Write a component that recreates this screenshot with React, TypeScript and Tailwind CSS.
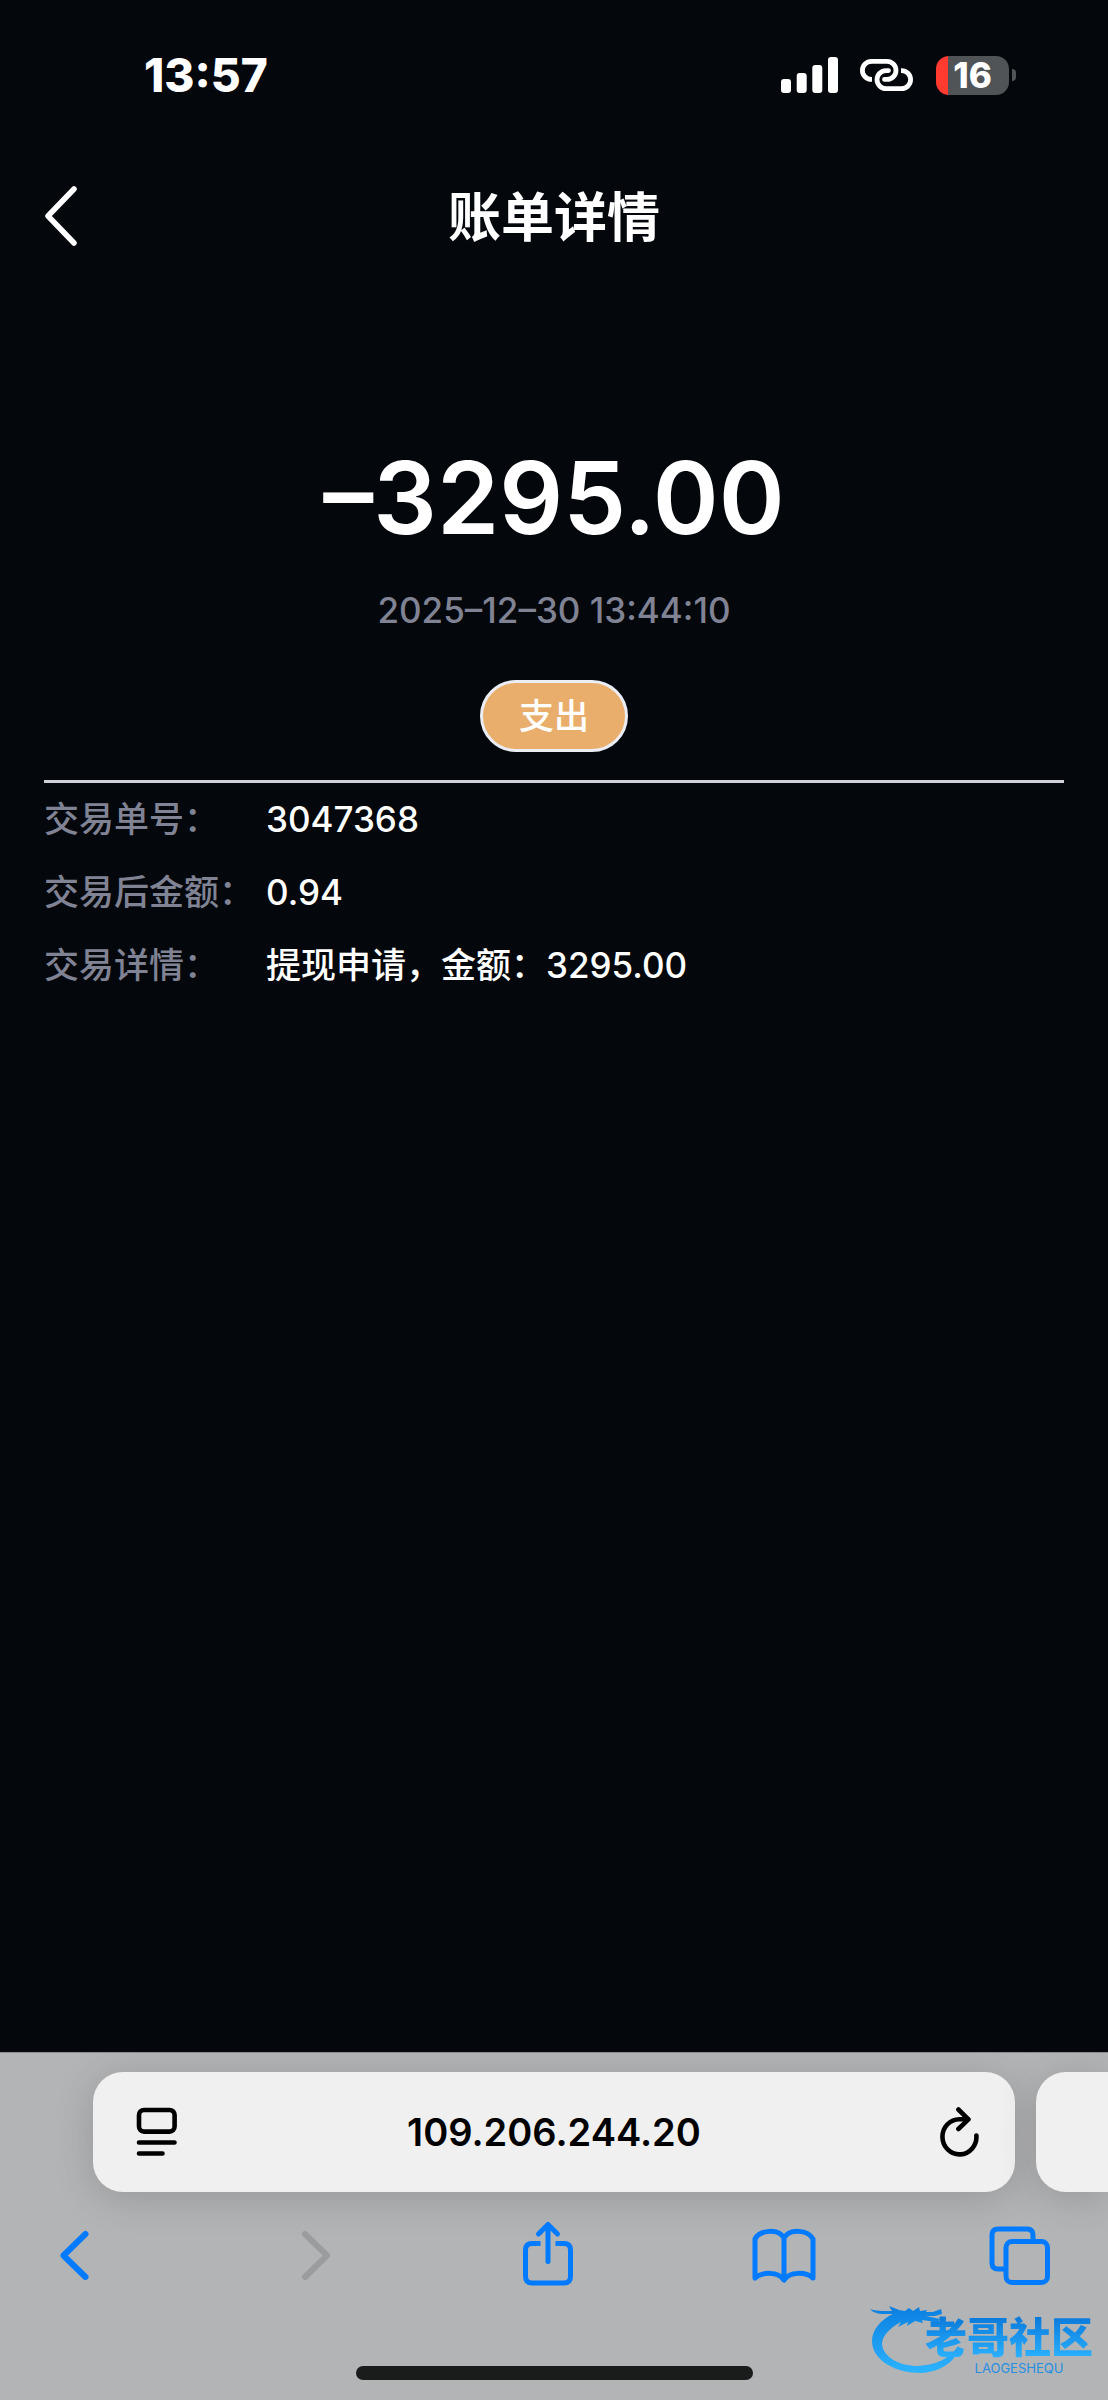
import type { ReactNode } from 'react';

const details = [
  { label: '交易单号：', value: '3047368' },
  { label: '交易后金额：', value: '0.94' },
  { label: '交易详情：', value: '提现申请，金额：3295.00' },
];

function StatusBar() {
  return (
    <div className="flex h-[150px] items-center justify-between pl-[144px] pr-[92px]">
      <span className="text-[46px] font-extrabold leading-none">13:57</span>
      <div className="flex items-center">
        <svg width="57" height="36" viewBox="0 0 57 36" fill="currentColor" aria-hidden="true">
          <rect x="0" y="22" width="10" height="14" rx="3" />
          <rect x="15.7" y="16" width="10" height="20" rx="3" />
          <rect x="31.3" y="8" width="10" height="28" rx="3" />
          <rect x="47" y="0" width="10" height="36" rx="3" />
        </svg>
        <svg
          className="ml-[22px]"
          width="53"
          height="32"
          viewBox="0 0 53 32"
          fill="none"
          stroke="currentColor"
          strokeWidth="4.8"
          aria-hidden="true"
        >
          <path strokeLinecap="round" d="M24.5 20.4H27a9 9 0 0 0 0-18H11.4" />
          <path d="M12 20.4h-.6a9 9 0 0 1 0-18" />
          <path strokeLinecap="round" d="M28.5 11.6H26a9 9 0 0 0 0 18h15.6" />
          <path d="M41 11.6h.6a9 9 0 0 1 0 18" />
        </svg>
        <div className="ml-[23px] flex items-center gap-[3px]">
          <div className="flex h-[39px] w-[73px] items-center justify-center rounded-[13px] bg-[linear-gradient(to_right,#ff3b30_12px,#505457_12px)]">
            <span className="text-[35px] font-extrabold leading-[39px]">16</span>
          </div>
          <div className="h-3 w-1 rounded-r-full bg-[#505457]" />
        </div>
      </div>
    </div>
  );
}

function ToolbarButton({ label, disabled, children }: { label: string; disabled?: boolean; children: ReactNode }) {
  return (
    <button
      type="button"
      aria-label={label}
      disabled={disabled}
      className="size-16 text-[#007aff] disabled:text-[#9b9c9d]"
    >
      <svg
        className="size-16 overflow-visible"
        viewBox="0 0 64 64"
        fill="none"
        stroke="currentColor"
        strokeWidth="5"
        strokeLinecap="round"
        strokeLinejoin="round"
      >
        {children}
      </svg>
    </button>
  );
}

function CommunityLogo() {
  return (
    <div className="absolute bottom-[24px] right-[15px] h-[74px] w-[224px]">
      <svg className="absolute inset-0 size-full" viewBox="0 0 224 74" aria-hidden="true">
        <defs>
          <linearGradient id="dragon" x1="0" y1="0" x2="0" y2="1">
            <stop offset="0" stopColor="#0a7ee0" />
            <stop offset="1" stopColor="#2cb4ff" />
          </linearGradient>
        </defs>
        <path
          fill="url(#dragon)"
          d="M1 7C7 9 13 9 23 9L20 4L30 8L36 9L40 6L44 9L50 5L51 9L58 8L57 10L64 10L72 7L73 12L66 14L57 14L71 17L69 21L60 19L53 18L54 21L46 19L38 24L39 20L29 25L32 20C21 26 13 34 13 42C14 55 30 64 49 64C67 63 82 56 89 44C90 57 73 70 52 71C26 71 3 58 3 39C3 27 13 17 24 12C15 12 6 13 1 7Z"
        />
      </svg>
      <div className="absolute bottom-0 right-0 flex flex-col items-center">
        <span className="bg-linear-to-b from-[#0a78da] to-[#2cb4ff] bg-clip-text text-[42px] font-black leading-[44px] text-transparent">
          老哥社区
        </span>
        <span className="pl-5 text-[13px] leading-[16px] text-[#2590e2]">LAOGESHEQU</span>
      </div>
    </div>
  );
}

function BrowserBar() {
  return (
    <footer className="relative overflow-hidden border-t border-[#8b8c8e] bg-[#b3b4b6] pb-5 pt-[19px]">
      <div className="flex gap-[21px] pl-[93px]">
        <div className="grid h-[120px] flex-1 grid-cols-[1fr_auto_1fr] items-center rounded-[30px] bg-[#f0f0f0] px-[34px] text-black shadow-[0_6px_40px_rgba(0,0,0,0.16)]">
          <button type="button" aria-label="页面设置" className="justify-self-start pl-2">
            <svg width="42" height="50" viewBox="0 0 42 50" fill="none" stroke="currentColor" strokeWidth="4.6" strokeLinecap="round">
              <rect x="4" y="3" width="35.6" height="21.6" rx="5" />
              <path d="M4 35.5H39.5M4 46.5H27.5" />
            </svg>
          </button>
          <span className="text-[38px] font-semibold leading-none">109.206.244.20</span>
          <button type="button" aria-label="重新加载" className="justify-self-end">
            <svg
              width="42"
              height="50"
              viewBox="0 0 42 50"
              fill="none"
              stroke="currentColor"
              strokeWidth="4.6"
              strokeLinecap="round"
              strokeLinejoin="round"
            >
              <path d="M37.4 28.5A17 17.6 0 1 1 20.4 12.2H29" />
              <path d="M19.4 2.5L29.4 12.4L19.4 22" />
            </svg>
          </button>
        </div>
        <div className="w-[72px] rounded-l-[30px] bg-[#f0f0f0] shadow-[0_6px_40px_rgba(0,0,0,0.16)]" />
      </div>
      <div className="mt-[31px] flex justify-between pl-[42px] pr-14">
        <ToolbarButton label="后退">
          <path strokeWidth="6" d="M43.5 11L21.5 32.5L43.5 54" />
        </ToolbarButton>
        <ToolbarButton label="前进" disabled>
          <path strokeWidth="6" d="M26 11L48 32.5L26 54" />
        </ToolbarButton>
        <ToolbarButton label="分享">
          <path strokeLinecap="butt" d="M25.5 20.5H17q-6.5 0-6.5 6.5V53.5q0 6.5 6.5 6.5H49q6.5 0 6.5-6.5V27q0-6.5-6.5-6.5H40.5" />
          <path d="M33 38.5V2M23.5 11L33 1.5L42.5 11" />
        </ToolbarButton>
        <ToolbarButton label="书签">
          <path d="M3 55V16C8 7 26 5 32 15C38 5 56 7 61 16V55C54 49 38 48 32 57C26 48 10 49 3 55ZM32 15V57" />
        </ToolbarButton>
        <ToolbarButton label="标签页">
          <path strokeLinecap="butt" d="M18 46H10q-6 0-6-6V12q0-6 6-6H39q6 0 6 6V18" />
          <rect x="18" y="18.5" width="41.5" height="41" rx="6" />
        </ToolbarButton>
      </div>
      <div className="mx-auto mt-[79px] h-[14px] w-[397px] rounded-full bg-[#1a1b1b]" />
      <CommunityLogo />
    </footer>
  );
}

export default function App() {
  return (
    <div className="flex min-h-screen flex-col bg-[#04070c] font-['Inter','Noto_Sans_CJK_SC',sans-serif] text-white">
      <StatusBar />
      <header className="grid h-[132px] grid-cols-[1fr_auto_1fr] items-center px-11">
        <button type="button" aria-label="返回" className="justify-self-start">
          <svg
            width="33"
            height="60"
            viewBox="0 0 33 60"
            fill="none"
            stroke="currentColor"
            strokeWidth="5.5"
            strokeLinecap="round"
            strokeLinejoin="round"
          >
            <path d="M30 3L4 30L30 57" />
          </svg>
        </button>
        <h1 className="pt-1 text-[53px] font-bold leading-none">账单详情</h1>
      </header>

      <main className="flex-1 px-11 pt-[168px]">
        <section className="flex flex-col items-center border-b-[3px] border-[#d0d1da] pb-7">
          <p className="text-[100px] font-semibold leading-[96px]">–3295.00</p>
          <time className="mt-10 text-[35px] font-medium leading-[48px] text-[#808394]">2025–12–30 13:44:10</time>
          <span className="mt-[46px] flex h-[72px] items-center rounded-full border-[3px] border-[#ebedf5] bg-[#e9ae6b] px-9 text-[35px] font-medium">
            支出
          </span>
        </section>
        <dl>
          {details.map((item) => (
            <div key={item.label} className="flex text-[35px] font-medium leading-[73px]">
              <dt className="w-[222px] shrink-0 text-[#808394]">{item.label}</dt>
              <dd>{item.value}</dd>
            </div>
          ))}
        </dl>
      </main>

      <BrowserBar />
    </div>
  );
}
